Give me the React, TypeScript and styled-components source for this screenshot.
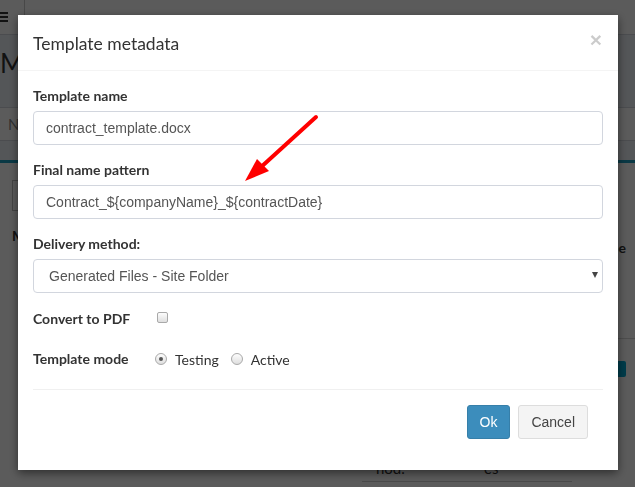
import React, { FC } from 'react';
import styled, { createGlobalStyle } from 'styled-components';

const GlobalStyle = createGlobalStyle`
  html, body {
    margin: 0;
    padding: 0;
    width: 635px;
    height: 487px;
    overflow: hidden;
    background: #ecf0f5;
  }
  * {
    box-sizing: border-box;
  }
`;

const uiFont = `'Lato', 'Open Sans', sans-serif`;
const inputFont = `'Liberation Sans', Arial, sans-serif`;

/* ---------- page behind the dialog ---------- */

const Page = styled.div`
  width: 635px;
  height: 487px;
  font-family: ${uiFont};
  color: #333;
  overflow: hidden;
`;

const Navbar = styled.div`
  height: 35px;
  background: #ffffff;
  border-bottom: 1px solid #d2d6de;
  display: flex;
`;

const Toggle = styled.div`
  width: 25px;
  border-right: 1px solid #c9c9c9;
  display: flex;
  align-items: center;
  overflow: hidden;
`;

const Burger = styled.div`
  margin-left: -4px;
  width: 12px;
  display: flex;
  flex-direction: column;
  gap: 2px;
  span {
    height: 2px;
    background: #333;
  }
`;

const PageHeader = styled.div`
  height: 72px;
  padding-top: 12px;
  h1 {
    margin: 0;
    font-size: 26px;
    font-weight: 400;
    font-family: ${uiFont};
    color: #333;
  }
`;

const TabBar = styled.div`
  height: 34px;
  background: #ffffff;
  border-top: 1px solid #d2d6de;
  border-bottom: 1px solid #d2d6de;
  display: flex;
  align-items: center;
  padding-left: 8px;
  font-size: 15px;
  color: #888;
`;

const Box = styled.div`
  margin-top: 19px;
  border-top: 3px solid #1c9fc2;
  background: #ffffff;
  height: 330px;
  padding: 17px 0 0 12px;
`;

const ToolbarField = styled.div`
  width: 240px;
  height: 31px;
  border: 1px solid #bdbdbd;
`;

const HeadRow = styled.div`
  display: flex;
  justify-content: space-between;
  margin-top: 16px;
  font-weight: 700;
  font-size: 14px;
  padding-right: 9px;
`;

const RightHead = styled.span`
  margin-top: 12px;
`;

const RowLine = styled.div`
  margin-top: 82px;
  margin-left: 350px;
  border-top: 1px solid #d8d8d8;
`;

const ActionRow = styled.div`
  display: flex;
  justify-content: flex-end;
  margin-top: 22px;
`;

const SmallBtn = styled.div`
  width: 30px;
  height: 16px;
  background: #00a7d0;
  border-radius: 2px;
  color: #fff;
  font-size: 12px;
  line-height: 16px;
  padding-left: 2px;
  margin-right: 9px;
`;

const BottomRow = styled.div`
  display: flex;
  margin-top: 82px;
  margin-left: 350px;
  width: 210px;
  padding: 0 0 4px 14px;
  border-bottom: 1px solid #cfcfcf;
  font-size: 15px;
  color: #333;
  span:first-child {
    width: 108px;
  }
`;

/* ---------- dialog ---------- */

const Backdrop = styled.div`
  position: fixed;
  inset: 0;
  background: rgba(0, 0, 0, 0.645);
`;

const Modal = styled.div`
  position: fixed;
  left: 18px;
  top: 15px;
  width: 600px;
  background: #ffffff;
  box-shadow: 0 3px 9px rgba(0, 0, 0, 0.5);
  font-family: ${uiFont};
  color: #333;
`;

const ModalHeader = styled.div`
  display: flex;
  align-items: center;
  justify-content: space-between;
  padding: 15px;
  border-bottom: 1px solid #f4f4f4;
  height: 56px;
`;

const Title = styled.h4`
  margin: 1px 0 0;
  font-size: 17.5px;
  font-weight: 400;
  line-height: 25px;
`;

const Close = styled.button`
  border: 0;
  background: transparent;
  padding: 0;
  margin-top: -6px;
  margin-right: 1px;
  font-family: ${inputFont};
  font-size: 21px;
  font-weight: 700;
  line-height: 1;
  color: #000;
  opacity: 0.2;
  cursor: pointer;
`;

const ModalBody = styled.div`
  padding: 15px 15px 16px;
`;

const FormGroup = styled.div`
  margin-bottom: 15px;
`;

const Label = styled.label`
  display: block;
  font-weight: 700;
  font-size: 14px;
  line-height: 20px;
  margin-bottom: 5px;
`;

const TextInput = styled.input`
  display: block;
  width: 100%;
  height: 34px;
  padding: 6px 12px;
  border: 1px solid #d2d6de;
  border-radius: 4px;
  font-family: ${inputFont};
  font-size: 14px;
  color: #555;
  background: #fff;
  outline: none;
`;

const SelectWrap = styled.div`
  position: relative;
`;

const Select = styled.select`
  display: block;
  width: 100%;
  height: 34px;
  padding: 6px 12px 6px 15px;
  border: 1px solid #d2d6de;
  border-radius: 4px;
  font-family: ${inputFont};
  font-size: 14px;
  color: #555;
  background: #fff;
  appearance: none;
  outline: none;
`;

const Caret = styled.span`
  position: absolute;
  right: 5px;
  top: 13px;
  width: 0;
  height: 0;
  border-left: 3.5px solid transparent;
  border-right: 3.5px solid transparent;
  border-top: 6px solid #444;
  pointer-events: none;
`;

const InlineRow = styled.div<{ gap?: number }>`
  display: flex;
  align-items: center;
  height: 20px;
  margin-top: ${({ gap }) => gap ?? 0}px;
`;

const RowLabel = styled.span`
  width: 122px;
  font-weight: 700;
  font-size: 14px;
`;

const Check = styled.span`
  width: 11px;
  height: 11px;
  border: 1px solid #a9a9a9;
  border-radius: 2px;
  background: linear-gradient(#fdfdfd, #dedede);
  margin-left: 2px;
  margin-top: -1px;
`;

const Radio = styled.span<{ checked?: boolean }>`
  width: 12px;
  height: 12px;
  border: 1px solid #a9a9a9;
  border-radius: 50%;
  background: linear-gradient(#fdfdfd, #dedede);
  display: flex;
  align-items: center;
  justify-content: center;
  margin-top: 2px;
  &::after {
    content: '';
    width: 4px;
    height: 4px;
    border-radius: 50%;
    background: ${({ checked }) => (checked ? '#555' : 'transparent')};
  }
`;

const RadioText = styled.span`
  font-size: 14px;
  margin-left: 8px;
  margin-right: 12px;
  margin-top: 2px;
`;

const Footer = styled.div`
  margin-top: 21px;
  border-top: 1px solid #f0f0f0;
  padding: 15px;
  display: flex;
  justify-content: flex-end;
  gap: 8px;
`;

const Button = styled.button<{ primary?: boolean }>`
  height: 34px;
  padding: 6px 12px;
  border-radius: 3px;
  font-family: ${inputFont};
  font-size: 14px;
  border: 1px solid ${({ primary }) => (primary ? '#367fa9' : '#dddddd')};
  background: ${({ primary }) => (primary ? '#3c8dbc' : '#f4f4f4')};
  color: ${({ primary }) => (primary ? '#ffffff' : '#444444')};
  cursor: pointer;
`;

const Annotation = styled.svg`
  position: fixed;
  left: 0;
  top: 0;
  pointer-events: none;
`;

const App: FC = () => (
  <>
    <GlobalStyle />
    <Page>
      <Navbar>
        <Toggle>
          <Burger>
            <span />
            <span />
            <span />
          </Burger>
        </Toggle>
      </Navbar>
      <PageHeader>
        <h1>My</h1>
      </PageHeader>
      <TabBar>N</TabBar>
      <Box>
        <ToolbarField />
        <HeadRow>
          <span>M</span>
          <RightHead>Type</RightHead>
        </HeadRow>
        <RowLine />
        <ActionRow>
          <SmallBtn>Fix</SmallBtn>
        </ActionRow>
        <BottomRow>
          <span>nod.</span>
          <span>es</span>
        </BottomRow>
      </Box>
    </Page>

    <Backdrop />
    <Modal>
      <ModalHeader>
        <Title>Template metadata</Title>
        <Close aria-label="Close">×</Close>
      </ModalHeader>
      <ModalBody>
        <FormGroup>
          <Label>Template name</Label>
          <TextInput defaultValue="contract_template.docx" />
        </FormGroup>
        <FormGroup>
          <Label>Final name pattern</Label>
          <TextInput defaultValue="Contract_${companyName}_${contractDate}" />
        </FormGroup>
        <FormGroup>
          <Label>Delivery method:</Label>
          <SelectWrap>
            <Select defaultValue="site">
              <option value="site">Generated Files - Site Folder</option>
            </Select>
            <Caret />
          </SelectWrap>
        </FormGroup>
        <InlineRow gap={5}>
          <RowLabel>Convert to PDF</RowLabel>
          <Check />
        </InlineRow>
        <InlineRow gap={20}>
          <RowLabel>Template mode</RowLabel>
          <Radio checked />
          <RadioText>Testing</RadioText>
          <Radio />
          <RadioText>Active</RadioText>
        </InlineRow>
        <Footer>
          <Button primary>Ok</Button>
          <Button>Cancel</Button>
        </Footer>
      </ModalBody>
    </Modal>

    <Annotation width="635" height="487" viewBox="0 0 635 487">
      <line x1="316" y1="117" x2="260" y2="168" stroke="#ff0000" strokeWidth="4" strokeLinecap="round" />
      <polygon points="245,181 257,159 269,171" fill="#ff0000" />
    </Annotation>
  </>
);

export default App;
